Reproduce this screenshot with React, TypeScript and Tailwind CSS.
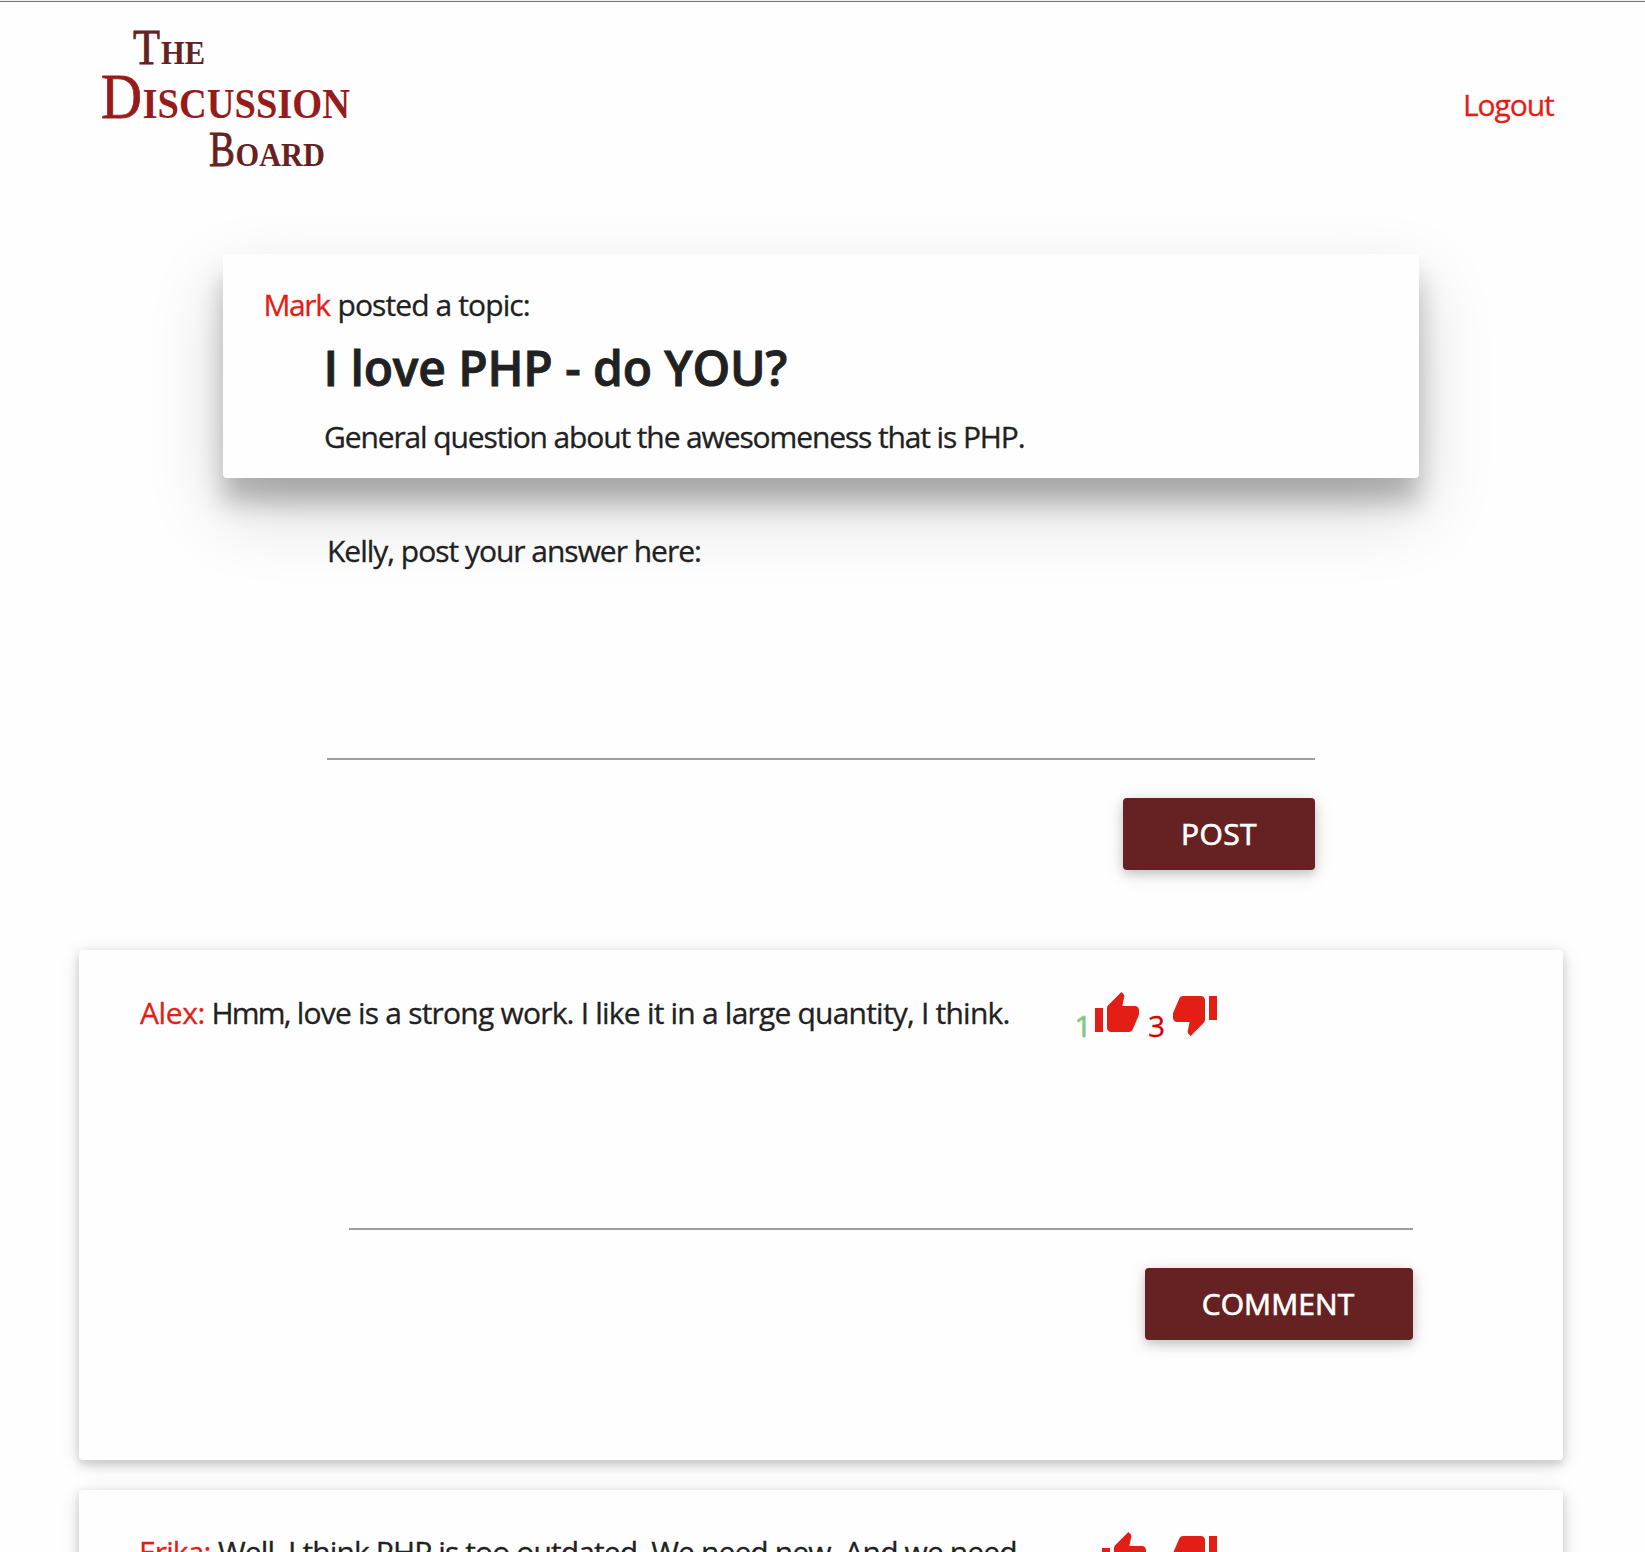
import React from 'react';

function ThumbUp() {
  return (
    <svg viewBox="0 0 24 24" className="size-12 shrink-0 fill-[#e31e17]" aria-hidden="true">
      <path d="M1 21h4V9H1v12zm22-11c0-1.1-.9-2-2-2h-6.31l.95-4.57.03-.32c0-.41-.17-.79-.44-1.06L14.17 1 7.59 7.59C7.22 7.95 7 8.45 7 9v10c0 1.1.9 2 2 2h9c.83 0 1.54-.5 1.84-1.22l3.02-7.05c.09-.23.14-.47.14-.73v-1.91l-.01-.01L23 10z" />
    </svg>
  );
}

function ThumbDown() {
  return (
    <svg viewBox="0 0 24 24" className="size-12 shrink-0 fill-[#e31e17]" aria-hidden="true">
      <path d="M15 3H6c-.83 0-1.54.5-1.84 1.22l-3.02 7.05c-.09.23-.14.47-.14.73v1.91l.01.01L1 14c0 1.1.9 2 2 2h6.31l-.95 4.57-.03.32c0 .41.17.79.44 1.06L9.83 23l6.59-6.59c.36-.36.58-.86.58-1.41V5c0-1.1-.9-2-2-2zm4 0v12h4V3h-4z" />
    </svg>
  );
}

function Logo() {
  return (
    <svg
      viewBox="0 0 260 156"
      className="h-[156px] w-[260px] shrink-0 overflow-visible"
      fontFamily="'Liberation Serif', serif"
      strokeWidth="0.8"
      role="img"
      aria-label="The Discussion Board"
    >
      <g fill="#662222" stroke="#662222">
        <text x="32" y="39.5" fontSize="50" textLength="27" lengthAdjust="spacingAndGlyphs">T</text>
        <text x="60" y="39.5" fontSize="33" fontWeight="700" strokeWidth="0" textLength="44" lengthAdjust="spacingAndGlyphs">HE</text>
      </g>
      <g fill="#971b1b" stroke="#971b1b">
        <text x="0" y="93.5" fontSize="63" textLength="41" lengthAdjust="spacingAndGlyphs">D</text>
        <text x="41.5" y="93.5" fontSize="42" fontWeight="700" strokeWidth="0" textLength="207.5" lengthAdjust="spacingAndGlyphs">ISCUSSION</text>
      </g>
      <g fill="#662222" stroke="#662222">
        <text x="108" y="142" fontSize="50" textLength="26" lengthAdjust="spacingAndGlyphs">B</text>
        <text x="134.5" y="142" fontSize="33" fontWeight="700" strokeWidth="0" textLength="89.5" lengthAdjust="spacingAndGlyphs">OARD</text>
      </g>
    </svg>
  );
}

const raised = 'shadow-[0_4px_10px_0_rgba(0,0,0,0.16),0_4px_20px_0_rgba(0,0,0,0.12)]';

export default function App() {
  return (
    <div
      className="h-[1552px] w-[1645px] overflow-hidden bg-[#fefefe] text-[30px] leading-[44px] text-[#212121] [-webkit-text-stroke:0.3px]"
      style={{ fontFamily: "'Open Sans', sans-serif" }}
    >
      <div className="h-0.5 border-b border-[#777777] bg-[#eeeeee]" />

      <header className="flex h-[252px] items-start justify-between pt-[22px] pr-[87px] pl-[101px]">
        <Logo />
        <a className="mt-[59px] w-[95px] whitespace-nowrap tracking-[-1.1px] text-[#e31e17]">Logout</a>
      </header>

      <section className="ml-[223px] h-[224px] w-[1196px] rounded bg-[#fefefe] pt-[29px] pl-[40.5px] shadow-[0_24px_26px_0_rgba(0,0,0,0.24),0_32px_74px_0_rgba(0,0,0,0.17)]">
        <div className="flex whitespace-nowrap">
          <span className="w-[74px] tracking-[-1.4px] text-[#e31e17]">Mark</span>
          <span className="tracking-[-0.9px]">posted a topic:</span>
        </div>
        <h1 className="mt-[13px] ml-[60px] text-5xl leading-[56px] font-semibold tracking-[-0.24px] whitespace-nowrap [-webkit-text-stroke:0.9px] [word-spacing:0.4px]">
          I love PHP - do YOU?
        </h1>
        <p className="mt-[19px] ml-[60.5px] tracking-[-1.12px] whitespace-nowrap">
          General question about the awesomeness that is PHP.
        </p>
      </section>

      <form className="relative ml-[327px] flex w-[988px] flex-col pt-[51px]">
        <label className="h-[43px] tracking-[-1.02px] whitespace-nowrap">Kelly, post your answer here:</label>
        <div className="h-[188px] border-b-2 border-[#9e9e9e]" />
        <button
          type="button"
          className={`mt-[38px] h-[72px] w-48 self-end rounded bg-[#662222] tracking-[0.4px] text-white [-webkit-text-stroke:0.7px] ${raised}`}
        >
          POST
        </button>
      </form>

      <section className={`mt-20 ml-[79px] h-[510px] w-[1484px] rounded bg-[#fefefe] pt-10 pl-[61px] ${raised}`}>
        <div className="flex h-16 whitespace-nowrap">
          <span className="mt-px w-[71.5px] shrink-0 tracking-[-0.4px] text-[#e31e17]">Alex:</span>
          <span className="mt-px w-[863px] shrink-0 tracking-[-0.79px]">
            <span className="tracking-[-1.8px]">Hmm,</span> love is a strong work. I like it in a large quantity, I think.
          </span>
          <span className="mt-[14px] w-[18.5px] shrink-0 text-[#81c784] [-webkit-text-stroke:0.7px]">1</span>
          <ThumbUp />
          <span className="mt-[14px] w-[30px] shrink-0 pl-[7px] text-[#d50000]">3</span>
          <ThumbDown />
        </div>
        <div className="ml-[209px] flex w-[1064px] flex-col">
          <div className="h-44 border-b-2 border-[#9e9e9e]" />
          <button
            type="button"
            className={`mt-[38px] h-[72px] w-[268px] self-end rounded bg-[#662222] pr-0.5 tracking-[0.1px] text-white [-webkit-text-stroke:0.7px] ${raised}`}
          >
            COMMENT
          </button>
        </div>
      </section>

      <section className={`mt-[30px] ml-[79px] h-[510px] w-[1484px] rounded bg-[#fefefe] pt-10 pl-[60px] ${raised}`}>
        <div className="flex h-16 whitespace-nowrap">
          <span className="w-[79px] shrink-0 tracking-[-0.9px] text-[#e31e17]">Erika:</span>
          <span className="w-[882px] shrink-0 tracking-[-0.88px]">
            Well, I think PHP is too outdated. We need new. And we need
          </span>
          <ThumbUp />
          <span className="w-[23px]" />
          <ThumbDown />
        </div>
      </section>
    </div>
  );
}
